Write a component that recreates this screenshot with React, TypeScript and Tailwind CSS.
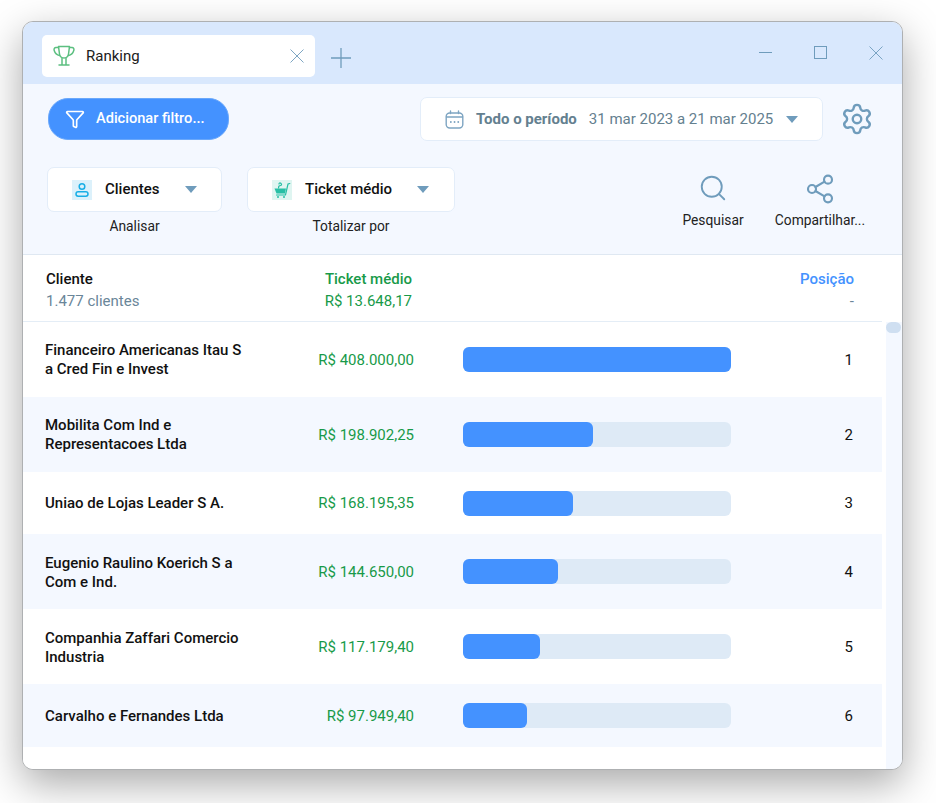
import { Filter, Search, Settings, Share2 } from "lucide-react";

const rows = [
  { name: "Financeiro Americanas Itau S a Cred Fin e Invest", value: "R$ 408.000,00", pct: 100, h: "h-[75px]" },
  { name: "Mobilita Com Ind e Representacoes Ltda", value: "R$ 198.902,25", pct: 48.5, h: "h-[75px]" },
  { name: "Uniao de Lojas Leader S A.", value: "R$ 168.195,35", pct: 41, h: "h-[62px]" },
  { name: "Eugenio Raulino Koerich S a Com e Ind.", value: "R$ 144.650,00", pct: 35.5, h: "h-[75px]" },
  { name: "Companhia Zaffari Comercio Industria", value: "R$ 117.179,40", pct: 28.7, h: "h-[75px]" },
  { name: "Carvalho e Fernandes Ltda", value: "R$ 97.949,40", pct: 24, h: "h-[63px]" },
  { name: "Atacadao Dia a Dia Comercio e Distribuicao", value: "R$ 90.120,00", pct: 22, h: "h-[75px]" },
];

function Caret() {
  return <div className="w-0 h-0 border-l-[6.5px] border-r-[6.5px] border-t-[7px] border-l-transparent border-r-transparent border-t-[#6f9cbc]" />;
}

function Cross({ className = "" }: { className?: string }) {
  return (
    <svg className={className} width="14" height="14" viewBox="0 0 14 14" fill="none" stroke="#6f9cbc" strokeWidth="0.9">
      <path d="M0.500 0.500l13 13M13.500 0.500l-13 13" />
    </svg>
  );
}

function Trophy() {
  return (
    <svg width="22" height="24" viewBox="0 0 22 24" fill="none" stroke="#5cbf80" strokeWidth="1.500" strokeLinejoin="round" strokeLinecap="round">
      <path d="M5.500 2.500h11l-1 7.500c-.4 2.400-2 4-4.500 4s-4.100-1.600-4.500-4z" />
      <path d="M5.500 3.500H3C1.500 3.500 .7 4.800 1.200 6.500c.8 2.600 2.600 4.500 5.300 5" />
      <path d="M16.500 3.500H19c1.500 0 2.300 1.300 1.800 3-.8 2.600-2.600 4.500-5.300 5" />
      <path d="M9 14v7M13 14v7M6 21h10" />
    </svg>
  );
}

function CalendarIcon() {
  return (
    <svg width="19" height="19" viewBox="0 0 19 19" fill="none" stroke="#7ea5c2" strokeWidth="1.400" strokeLinecap="round">
      <rect x="1.200" y="3" width="16.600" height="15" rx="3.500" />
      <path d="M1.500 7h16M5.500 1v2.500M13.500 1v2.500" />
      <path d="M5.800 12h.1M9.500 12h.1M13.200 12h.1" strokeWidth="1.800" />
    </svg>
  );
}

function UserIcon() {
  return (
    <div className="w-5 h-5 bg-[#dcf1fb] flex items-center justify-center">
      <svg width="16" height="16" viewBox="0 0 16 16" fill="none" stroke="#18aee6" strokeWidth="1.500">
        <circle cx="8" cy="4.500" r="2.800" />
        <rect x="2" y="9.800" width="12" height="4.400" rx="2.200" />
      </svg>
    </div>
  );
}

function CartIcon() {
  return (
    <div className="w-5 h-5 bg-[#dff5f1] flex items-center justify-center">
      <svg width="18" height="18" viewBox="0 0 18 18" fill="none">
        <path d="M1.500 7.500h11.500l-1 5H3.500z" fill="#26bfa5" />
        <path d="M3.500 14h9l2.500-11 1.800-.5" stroke="#26bfa5" strokeWidth="1.200" strokeLinecap="round" />
        <path d="M5.500 7c0-2 1-2.500 2-2.500S9 3.500 8 2.500 6 2 6 3" stroke="#26bfa5" strokeWidth="1.200" strokeLinecap="round" />
        <circle cx="5" cy="16" r="1" fill="#26bfa5" />
        <circle cx="11" cy="16" r="1" fill="#26bfa5" />
      </svg>
    </div>
  );
}

export default function App() {
  return (
    <div className="w-[936px] h-[803px] bg-white pt-[21px] pl-[22px] overflow-hidden font-['Roboto',sans-serif]">
      <div className="w-[881px] h-[749px] flex flex-col rounded-[11px] border border-[#aeb0b2] overflow-hidden bg-white shadow-[0_14px_40px_rgba(0,0,0,0.34)]">

        {/* barra de titulo */}
        <div className="h-[62px] shrink-0 bg-[#d9e8fd] flex pt-[13px] pl-[19px]">
          <div className="w-[273px] h-[42px] bg-white rounded-[5px] flex items-center pl-[11px] pr-[11px]">
            <Trophy />
            <span className="ml-[11px] text-[15px] text-[#202020]">Ranking</span>
            <Cross className="ml-auto" />
          </div>
          <svg className="ml-[16px] mt-[13px]" width="20" height="20" viewBox="0 0 20 20" fill="none" stroke="#6f9cbc" strokeWidth="1.300">
            <path d="M10 0v20M0 10h20" />
          </svg>
          <div className="ml-auto flex items-start pt-[11px] pr-[19px]">
            <div className="w-[13px] h-px bg-[#6f9cbc] mt-[6px]" />
            <div className="ml-[42px] w-[13px] h-[13px] border border-[#6f9cbc]" />
            <Cross className="ml-[42px]" />
          </div>
        </div>

        {/* barra de ferramentas */}
        <div className="h-[171px] shrink-0 bg-[#f4f8ff] border-b border-[#dfe8f2] flex flex-col">
          <div className="flex items-start pt-[14px] pl-[25px]">
            <button className="w-[181px] h-[42px] rounded-[20px] bg-[#4492ff] flex items-center pl-[16px] text-white text-[14.600px] font-medium border border-[#6aa8fb]">
              <Filter size={20} strokeWidth={2} />
              <span className="ml-[11px]">Adicionar filtro...</span>
            </button>
            <div className="ml-[191px] w-[403px] h-[44px] -mt-px bg-white rounded-[7px] border border-[#e3edf9] flex items-center pl-[24px] text-[15px] text-[#64808f]">
              <CalendarIcon />
              <span className="ml-[12px] font-bold">Todo o período</span>
              <span className="ml-[12px]">31 mar 2023 a 21 mar 2025</span>
              <div className="ml-[13px]"><Caret /></div>
            </div>
            <Settings className="ml-[17px] mt-[4px]" size={34} strokeWidth={1.700} color="#6f9cbc" />
          </div>

          <div className="flex items-start pt-[26px] pl-[24px]">
            <div className="w-[175px] flex flex-col items-center">
              <div className="w-[175px] h-[45px] bg-white rounded-[7px] border border-[#e3edf9] flex items-center pl-[24px] text-[15px] font-medium text-[#111]">
                <UserIcon />
                <span className="ml-[13px]">Clientes</span>
                <div className="ml-auto mr-[24px]"><Caret /></div>
              </div>
              <span className="mt-[4px] text-[13.800px] text-[#222]">Analisar</span>
            </div>
            <div className="ml-[25px] w-[208px] flex flex-col items-center">
              <div className="w-[208px] h-[45px] bg-white rounded-[7px] border border-[#e3edf9] flex items-center pl-[24px] text-[15px] font-medium text-[#111]">
                <CartIcon />
                <span className="ml-[13px]">Ticket médio</span>
                <div className="ml-auto mr-[25px]"><Caret /></div>
              </div>
              <span className="mt-[4px] text-[13.800px] text-[#222]">Totalizar por</span>
            </div>
            <div className="ml-[208px] w-[100px] flex flex-col items-center">
              <Search className="mt-[6px]" size={30} strokeWidth={1.500} color="#6f9cbc" />
              <span className="mt-[7px] text-[13.800px] text-[#222]">Pesquisar</span>
            </div>
            <div className="ml-[2px] w-[110px] flex flex-col items-center">
              <Share2 className="mt-[6px]" size={32} strokeWidth={1.600} color="#6f9cbc" />
              <span className="mt-[5px] text-[13.800px] text-[#222] whitespace-nowrap">Compartilhar...</span>
            </div>
          </div>
        </div>

        {/* cabecalho da tabela */}
        <div className="h-[67px] shrink-0 flex pr-[28px] pl-[23px] pt-[15px] leading-[19px] text-[15px] border-b border-[#e4edf6] mr-[20px]">
          <div className="w-[200px]">
            <div className="font-medium text-[#111]">Cliente</div>
            <div className="mt-[3px] text-[#6a8699]">1.477 clientes</div>
          </div>
          <div className="w-[166px] text-right">
            <div className="font-medium text-[#189a49]">Ticket médio</div>
            <div className="mt-[3px] text-[#189a49]">R$ 13.648,17</div>
          </div>
          <div className="ml-auto text-right">
            <div className="font-medium text-[#4492ff]">Posição</div>
            <div className="mt-[3px] text-[#6a8699]">-</div>
          </div>
        </div>

        {/* linhas */}
        <div className="flex-1 flex overflow-hidden">
          <div className="w-[859px] shrink-0">
            {rows.map((r, i) => (
              <div key={r.name} className={`${r.h} flex items-center pl-[22px] pr-[29px] ${i % 2 === 1 ? "bg-[#f4f8ff]" : "bg-white"}`}>
                <div className={`w-[200px] text-[15px] font-medium leading-[19px] text-[#111] ${i > 2 ? "pt-[2px]" : ""}`}>{r.name}</div>
                <div className="w-[169px] pt-px text-right text-[15px] text-[#189a49]">{r.value}</div>
                <div className="ml-[49px] w-[268px] h-[25px] rounded-[6px] bg-[#deeaf6]">
                  <div className="h-full rounded-[6px] bg-[#4492ff]" style={{ width: `${r.pct}%` }} />
                </div>
                <div className="ml-auto pt-px text-[15px] text-[#111]">{i + 1}</div>
              </div>
            ))}
          </div>
          <div className="ml-[4px] flex-1 bg-[#f4f8ff]">
            <div className="h-[11px] mr-px rounded-[6px] bg-[#cfdff1]" />
          </div>
        </div>
      </div>
    </div>
  );
}
